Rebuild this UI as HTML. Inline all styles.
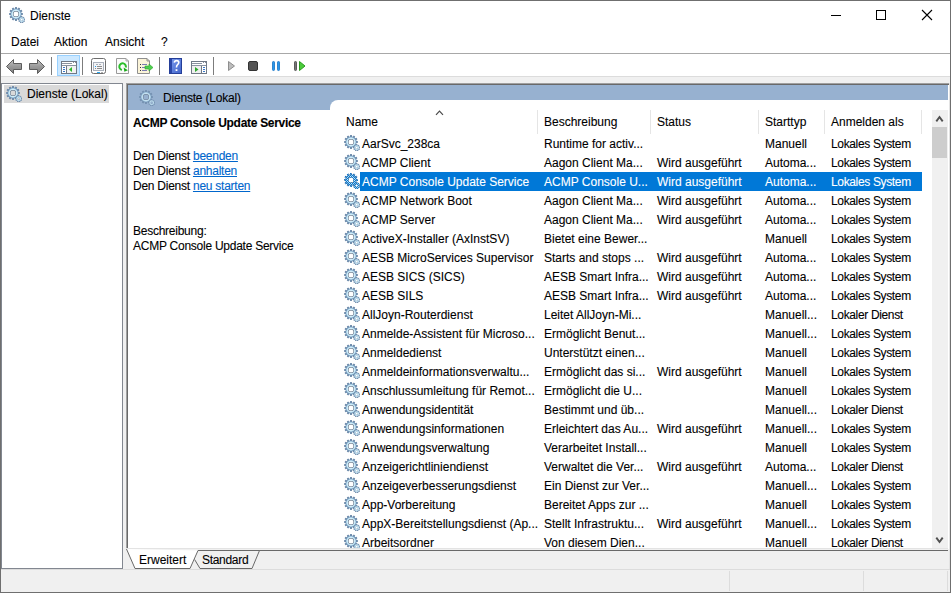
<!DOCTYPE html>
<html><head><meta charset="utf-8"><title>Dienste</title>
<style>
*{margin:0;padding:0;box-sizing:border-box}
html,body{width:951px;height:593px;overflow:hidden;background:#fff}
body{position:relative;font-family:"Liberation Sans",sans-serif;font-size:12px;line-height:15px;color:#000;-webkit-text-stroke:0.1px currentColor}
.a{position:absolute}
.t{position:absolute;white-space:nowrap;font-size:12px;line-height:15px}
.ic{position:absolute;width:16px;height:16px}
.sel{color:#fff}
</style></head><body>
<svg width="0" height="0" style="position:absolute">
<defs>
<radialGradient id="gg" cx="0.5" cy="0.5" r="0.5" gradientUnits="objectBoundingBox">
<stop offset="0" stop-color="#ffffff"/><stop offset="0.6" stop-color="#e2f6fd"/><stop offset="0.8" stop-color="#bfe3f4"/><stop offset="1" stop-color="#8cb4d4"/>
</radialGradient>
<symbol id="gear" viewBox="0 0 16 16">
<path d="M5.86 1.72 L6.15 0.05 L7.85 0.05 L8.14 1.72 L8.40 1.78 L8.65 1.86 L9.74 0.56 L11.21 1.41 L10.63 3.00 L10.82 3.18 L11.00 3.37 L12.59 2.79 L13.44 4.26 L12.14 5.35 L12.22 5.60 L12.28 5.86 L13.95 6.15 L13.95 7.85 L12.28 8.14 L12.22 8.40 L12.14 8.65 L13.44 9.74 L12.59 11.21 L11.00 10.63 L10.82 10.82 L10.63 11.00 L11.21 12.59 L9.74 13.44 L8.65 12.14 L8.40 12.22 L8.14 12.28 L7.85 13.95 L6.15 13.95 L5.86 12.28 L5.60 12.22 L5.35 12.14 L4.26 13.44 L2.79 12.59 L3.37 11.00 L3.18 10.82 L3.00 10.63 L1.41 11.21 L0.56 9.74 L1.86 8.65 L1.78 8.40 L1.72 8.14 L0.05 7.85 L0.05 6.15 L1.72 5.86 L1.78 5.60 L1.86 5.35 L0.56 4.26 L1.41 2.79 L3.00 3.37 L3.18 3.18 L3.37 3.00 L2.79 1.41 L4.26 0.56 L5.35 1.86 L5.60 1.78ZM4.30 7.00a2.7 2.7 0 1 0 5.40 0a2.7 2.7 0 1 0 -5.40 0Z" fill="#6d8bab" fill-rule="evenodd"/>
<path d="M1.90 7.00a5.1 5.1 0 1 0 10.20 0a5.1 5.1 0 1 0 -10.20 0ZM4.00 7.00a3.0 3.0 0 1 0 6.00 0a3.0 3.0 0 1 0 -6.00 0Z" fill="url(#gg)" fill-rule="evenodd"/>
<path d="M3.90 7.00a3.1 3.1 0 1 0 6.20 0a3.1 3.1 0 1 0 -6.20 0ZM4.40 7.00a2.6 2.6 0 1 0 5.20 0a2.6 2.6 0 1 0 -5.20 0Z" fill="#5d6b7c" fill-rule="evenodd" opacity="0.9"/>
<path d="M11.87 10.24 L12.15 9.24 L13.25 9.24 L13.53 10.24 L13.59 10.26 L13.64 10.28 L14.50 9.70 L15.34 10.40 L14.92 11.35 L14.95 11.40 L14.98 11.45 L16.01 11.56 L16.20 12.64 L15.27 13.09 L15.26 13.15 L15.25 13.21 L15.97 13.95 L15.42 14.90 L14.41 14.65 L14.37 14.69 L14.33 14.73 L14.40 15.76 L13.37 16.14 L12.76 15.30 L12.70 15.30 L12.64 15.30 L12.03 16.14 L11.00 15.76 L11.07 14.73 L11.03 14.69 L10.99 14.65 L9.98 14.90 L9.43 13.95 L10.15 13.21 L10.14 13.15 L10.13 13.09 L9.20 12.64 L9.39 11.56 L10.42 11.45 L10.45 11.40 L10.48 11.35 L10.06 10.40 L10.90 9.70 L11.76 10.28 L11.81 10.26ZM11.60 12.70a1.1 1.1 0 1 0 2.20 0a1.1 1.1 0 1 0 -2.20 0Z" fill="#6d8bab" fill-rule="evenodd"/>
<path d="M10.30 12.70a2.4 2.4 0 1 0 4.80 0a2.4 2.4 0 1 0 -4.80 0ZM11.50 12.70a1.2 1.2 0 1 0 2.40 0a1.2 1.2 0 1 0 -2.40 0Z" fill="#c8e8f6" fill-rule="evenodd"/>
</symbol>
<filter id="tint" color-interpolation-filters="sRGB"><feComponentTransfer><feFuncR type="linear" slope="1.1" intercept="-0.45"/><feFuncG type="linear" slope="1.4" intercept="-0.6"/><feFuncB type="linear" slope="1.6" intercept="-0.6"/></feComponentTransfer></filter>
<filter id="wht" color-interpolation-filters="sRGB"><feColorMatrix type="matrix" values="0 0 0 0 1 0 0 0 0 1 0 0 0 0 1 0 0 0 1 0"/></filter>
<pattern id="chk" width="2" height="2" patternUnits="userSpaceOnUse"><rect width="1" height="1" fill="#0078d7"/><rect x="1" y="1" width="1" height="1" fill="#0078d7"/></pattern>
<mask id="gm" maskUnits="userSpaceOnUse" x="0" y="0" width="16" height="16"><use href="#gear" width="16" height="16" filter="url(#wht)"/></mask>
</defs>
</svg>

<div class="a" style="left:0;top:0;width:951px;height:593px;border:1px solid #6f6f6f"></div>
<svg class="ic" style="left:9px;top:7px"><use href="#gear"/></svg>
<div class="t" style="left:30px;top:9px">Dienste</div>
<div class="a" style="left:831px;top:15px;width:10px;height:1px;background:#000"></div>
<div class="a" style="left:876px;top:10px;width:10px;height:10px;border:1px solid #000"></div>
<svg class="a" style="left:921px;top:9px" width="12" height="12"><path d="M1 1L11 11M11 1L1 11" stroke="#000" stroke-width="1.1"/></svg>
<div class="t" style="left:11px;top:35px">Datei</div>
<div class="t" style="left:54px;top:35px">Aktion</div>
<div class="t" style="left:105px;top:35px">Ansicht</div>
<div class="t" style="left:161px;top:35px">?</div>
<div class="a" style="left:1px;top:53px;width:949px;height:1px;background:#a8a8a8"></div>
<svg class="a" style="left:0;top:0" width="320" height="80" viewBox="0 0 320 80">
<defs>
<linearGradient id="ag" x1="0" y1="0" x2="0" y2="1"><stop offset="0" stop-color="#c4c4c4"/><stop offset="0.5" stop-color="#9a9a9a"/><stop offset="1" stop-color="#7e7e7e"/></linearGradient>
<linearGradient id="hb" x1="0" y1="0" x2="1" y2="1"><stop offset="0" stop-color="#7f9ff0"/><stop offset="1" stop-color="#3f62c8"/></linearGradient>
</defs>
<!-- back / forward -->
<path d="M6.5 66.5L13.5 59.5V63.5H21.5V69.5H13.5V73.5Z" fill="url(#ag)" stroke="#5c5c5c" stroke-width="1" stroke-linejoin="round"/>
<path d="M44.5 66.5L37.5 59.5V63.5H29.5V69.5H37.5V73.5Z" fill="url(#ag)" stroke="#5c5c5c" stroke-width="1" stroke-linejoin="round"/>
<rect x="51" y="57" width="1" height="18" fill="#7c7c7c"/>
<!-- selected button -->
<rect x="57.5" y="55.5" width="22" height="20" fill="#cce8ff" stroke="#99d1ff"/>
<rect x="61.5" y="61.5" width="15" height="12" fill="#fff" stroke="#6f7885"/>

<rect x="62" y="63" width="10" height="1" fill="#8a93a0"/>
<rect x="62" y="65" width="14" height="1" fill="#8a93a0"/>
<rect x="66" y="66" width="1" height="7" fill="#6f7885"/>
<rect x="63" y="67" width="2" height="1" fill="#3a78c8"/><rect x="63" y="69" width="2" height="1" fill="#3a78c8"/><rect x="63" y="71" width="2" height="1" fill="#3a78c8"/>
<rect x="67" y="66" width="9" height="7" fill="#f2f2f2"/><rect x="73" y="62" width="1" height="1" fill="#8a93a0"/><rect x="75" y="62" width="1" height="1" fill="#8a93a0"/><path d="M69 69.5L72 67V72Z" fill="#2ab82a"/>
<rect x="82" y="57" width="1" height="18" fill="#7c7c7c"/>
<!-- properties -->
<rect x="91.5" y="58.5" width="14" height="15" rx="2" fill="#fff" stroke="#6d6d6d"/>
<rect x="93.5" y="62.5" width="10" height="8" fill="#f4f4f6" stroke="#a9b0bb"/>
<rect x="96" y="64" width="2" height="1" fill="#a9b0bb"/><rect x="99" y="64" width="2" height="1" fill="#a9b0bb"/>
<rect x="95" y="66" width="1" height="1" fill="#1aa0f0"/><rect x="97" y="66" width="5" height="1" fill="#8c8c8c"/>
<rect x="95" y="68" width="1" height="1" fill="#8c8c8c"/><rect x="97" y="68" width="5" height="1" fill="#8c8c8c"/>
<rect x="97" y="72" width="3" height="1" fill="#2aa8f0"/><rect x="101" y="72" width="2" height="1" fill="#b0b0b0"/>
<!-- refresh -->
<path d="M116.5 58.5H126L128.5 61V73.5H116.5Z" fill="#fbfbfb" stroke="#9a9a9a"/>
<path d="M126 58.5V61H128.5" fill="none" stroke="#a8a8a8"/>
<path d="M122.03 69.85A3.3 3.3 0 1 1 125.79 67.45" fill="none" stroke="#2cbf2c" stroke-width="2"/>
<path d="M123.6 67.6L127.9 70.3L124.4 71.8Z" fill="#19a819"/>
<!-- export -->
<path d="M137.5 58.5H147L149.5 61V73.5H137.5Z" fill="#fbf4d8" stroke="#8f8f8f"/>
<path d="M147 58.5V61H149.5" fill="none" stroke="#8f8f8f"/>
<rect x="140" y="64" width="1" height="1" fill="#333"/><rect x="140" y="67" width="1" height="1" fill="#333"/><rect x="140" y="70" width="1" height="1" fill="#333"/>
<rect x="142" y="64" width="5" height="1" fill="#7c7cb0"/><rect x="142" y="67" width="5" height="1" fill="#7c7cb0"/><rect x="142" y="70" width="5" height="1" fill="#7c7cb0"/>
<path d="M145 66H149V64L153 67.5L149 71V69H145Z" fill="#4fcf4f" stroke="#2aa52a" stroke-width="0.6"/>
<rect x="159" y="57" width="1" height="18" fill="#7c7c7c"/>
<!-- help -->
<rect x="169" y="58" width="13" height="16" fill="url(#hb)"/>
<rect x="169" y="58" width="3" height="16" fill="#2a46a8"/>
<rect x="169.5" y="58.5" width="12" height="15" fill="none" stroke="#243e98"/>
<path d="M174.3 62.6Q174.6 60.6 176.6 60.6Q178.8 60.6 178.8 62.6Q178.8 63.9 177.4 64.9Q176.5 65.6 176.5 67.4" fill="none" stroke="#fff" stroke-width="1.6"/>
<rect x="175.6" y="69.2" width="1.8" height="1.8" fill="#fff"/>
<!-- action pane -->
<rect x="191.5" y="61.5" width="15" height="12" fill="#fff" stroke="#6f7885"/>
<rect x="192" y="63" width="10" height="1" fill="#8a93a0"/>
<rect x="203" y="62" width="1" height="1" fill="#8a93a0"/><rect x="205" y="62" width="1" height="1" fill="#8a93a0"/>
<rect x="192" y="65" width="14" height="1" fill="#8a93a0"/>
<rect x="201" y="66" width="1" height="7" fill="#6f7885"/>
<rect x="192" y="66" width="9" height="7" fill="#efefef"/>
<rect x="203" y="67" width="2" height="1" fill="#3a78c8"/><rect x="203" y="69" width="2" height="1" fill="#3a78c8"/><rect x="203" y="71" width="2" height="1" fill="#3a78c8"/>
<path d="M195 67V72L198.5 69.5Z" fill="#2ca82c"/>
<rect x="213" y="57" width="1" height="18" fill="#7c7c7c"/>
<!-- play disabled -->
<path d="M228.5 61.5V70.5L234.5 66Z" fill="#bdbdbd" stroke="#8e8e8e" stroke-linejoin="round"/>
<!-- stop -->
<rect x="248.5" y="61.5" width="9" height="9" rx="1.5" fill="#555" stroke="#333"/>
<!-- pause -->
<rect x="272.5" y="61.5" width="2" height="9" rx="0.8" fill="#2b97ea" stroke="#1572c4" stroke-width="0.8"/>
<rect x="277.5" y="61.5" width="2" height="9" rx="0.8" fill="#2b97ea" stroke="#1572c4" stroke-width="0.8"/>
<!-- restart -->
<rect x="294.5" y="61.5" width="2" height="9" rx="0.8" fill="#777" stroke="#444" stroke-width="0.8"/>
<path d="M299.5 61.5V70.5L305 66Z" fill="#4bcc3b" stroke="#2a9a20" stroke-linejoin="round"/>
</svg>

<div class="a" style="left:1px;top:76px;width:949px;height:1px;background:#dcdcdc"></div>
<div class="a" style="left:1px;top:77px;width:949px;height:515px;background:#f0f0f0"></div>
<div class="a" style="left:1px;top:83px;width:122px;height:486px;background:#fff;border:1px solid #828790"></div>
<div class="a" style="left:4px;top:85px;width:105px;height:18px;background:#d9d9d9"></div>
<svg class="ic" style="left:6px;top:86px"><use href="#gear"/></svg>
<div class="t" style="left:27px;top:87px">Dienste (Lokal)</div>
<div class="a" style="left:126px;top:83px;width:824px;height:466px;background:#fff;border-top:1px solid #a0a0a0;border-left:1px solid #a0a0a0"></div>
<div class="a" style="left:127px;top:84px;width:822px;height:1px;background:#696969"></div>
<div class="a" style="left:127px;top:84px;width:1px;height:465px;background:#696969"></div>
<div class="a" style="left:128px;top:85px;width:820px;height:15px;background:#97b1d0"></div>
<div class="a" style="left:128px;top:100px;width:210px;height:10px;background:#97b1d0"></div>
<div class="a" style="left:330px;top:100px;width:20px;height:20px;background:#fff;border-top-left-radius:8px"></div>
<svg class="ic" style="left:139px;top:90px;opacity:.8"><use href="#gear"/></svg>
<div class="t" style="left:163px;top:91px;letter-spacing:-0.2px">Dienste (Lokal)</div>
<div class="t" style="left:133px;top:116px;font-weight:bold;letter-spacing:-0.3px">ACMP Console Update Service</div>
<div class="t" style="left:133px;top:149px;letter-spacing:-0.25px">Den Dienst <span style="color:#0066cc;text-decoration:underline">beenden</span></div>
<div class="t" style="left:133px;top:164px;letter-spacing:-0.25px">Den Dienst <span style="color:#0066cc;text-decoration:underline">anhalten</span></div>
<div class="t" style="left:133px;top:179px;letter-spacing:-0.25px">Den Dienst <span style="color:#0066cc;text-decoration:underline">neu starten</span></div>
<div class="t" style="left:133px;top:224px;letter-spacing:-0.25px">Beschreibung:</div>
<div class="t" style="left:133px;top:239px;letter-spacing:-0.25px">ACMP Console Update Service</div>
<div class="t" style="left:346px;top:115px">Name</div>
<div class="t" style="left:544px;top:115px">Beschreibung</div>
<div class="t" style="left:657px;top:115px">Status</div>
<div class="t" style="left:765px;top:115px">Starttyp</div>
<div class="t" style="left:831px;top:115px">Anmelden als</div>
<div class="a" style="left:537px;top:110px;width:1px;height:24px;background:#e5e5e5"></div>
<div class="a" style="left:650px;top:110px;width:1px;height:24px;background:#e5e5e5"></div>
<div class="a" style="left:758px;top:110px;width:1px;height:24px;background:#e5e5e5"></div>
<div class="a" style="left:824px;top:110px;width:1px;height:24px;background:#e5e5e5"></div>
<div class="a" style="left:921px;top:110px;width:1px;height:24px;background:#e5e5e5"></div>
<svg class="a" style="left:435px;top:110px" width="10" height="6"><path d="M1 4.8L4.5 1.2L8 4.8" fill="none" stroke="#4a4a4a" stroke-width="1.2"/></svg>
<svg class="ic" style="left:344px;top:135px"><use href="#gear"/></svg>
<div class="t" style="left:362px;top:137px">AarSvc_238ca</div>
<div class="t" style="left:544px;top:137px">Runtime for activ...</div>
<div class="t" style="left:765px;top:137px">Manuell</div>
<div class="t" style="left:831px;top:137px;letter-spacing:-0.35px">Lokales System</div>
<svg class="ic" style="left:344px;top:154px"><use href="#gear"/></svg>
<div class="t" style="left:362px;top:156px">ACMP Client</div>
<div class="t" style="left:544px;top:156px">Aagon Client Ma...</div>
<div class="t" style="left:657px;top:156px">Wird ausgeführt</div>
<div class="t" style="left:765px;top:156px">Automa...</div>
<div class="t" style="left:831px;top:156px;letter-spacing:-0.35px">Lokales System</div>
<div class="a" style="left:360px;top:172px;width:562px;height:19px;background:#0078d7"></div>
<svg class="ic" style="left:344px;top:173px" viewBox="0 0 16 16"><use href="#gear" width="16" height="16"/><rect width="16" height="16" fill="url(#chk)" mask="url(#gm)"/></svg>
<div class="t sel" style="left:362px;top:175px">ACMP Console Update Service</div>
<div class="t sel" style="left:544px;top:175px">ACMP Console U...</div>
<div class="t sel" style="left:657px;top:175px">Wird ausgeführt</div>
<div class="t sel" style="left:765px;top:175px">Automa...</div>
<div class="t sel" style="left:831px;top:175px;letter-spacing:-0.35px">Lokales System</div>
<svg class="ic" style="left:344px;top:192px"><use href="#gear"/></svg>
<div class="t" style="left:362px;top:194px">ACMP Network Boot</div>
<div class="t" style="left:544px;top:194px">Aagon Client Ma...</div>
<div class="t" style="left:657px;top:194px">Wird ausgeführt</div>
<div class="t" style="left:765px;top:194px">Automa...</div>
<div class="t" style="left:831px;top:194px;letter-spacing:-0.35px">Lokales System</div>
<svg class="ic" style="left:344px;top:211px"><use href="#gear"/></svg>
<div class="t" style="left:362px;top:213px">ACMP Server</div>
<div class="t" style="left:544px;top:213px">Aagon Client Ma...</div>
<div class="t" style="left:657px;top:213px">Wird ausgeführt</div>
<div class="t" style="left:765px;top:213px">Automa...</div>
<div class="t" style="left:831px;top:213px;letter-spacing:-0.35px">Lokales System</div>
<svg class="ic" style="left:344px;top:230px"><use href="#gear"/></svg>
<div class="t" style="left:362px;top:232px">ActiveX-Installer (AxInstSV)</div>
<div class="t" style="left:544px;top:232px">Bietet eine Bewer...</div>
<div class="t" style="left:765px;top:232px">Manuell</div>
<div class="t" style="left:831px;top:232px;letter-spacing:-0.35px">Lokales System</div>
<svg class="ic" style="left:344px;top:249px"><use href="#gear"/></svg>
<div class="t" style="left:362px;top:251px">AESB MicroServices Supervisor</div>
<div class="t" style="left:544px;top:251px">Starts and stops ...</div>
<div class="t" style="left:657px;top:251px">Wird ausgeführt</div>
<div class="t" style="left:765px;top:251px">Automa...</div>
<div class="t" style="left:831px;top:251px;letter-spacing:-0.35px">Lokales System</div>
<svg class="ic" style="left:344px;top:268px"><use href="#gear"/></svg>
<div class="t" style="left:362px;top:270px">AESB SICS (SICS)</div>
<div class="t" style="left:544px;top:270px">AESB Smart Infra...</div>
<div class="t" style="left:657px;top:270px">Wird ausgeführt</div>
<div class="t" style="left:765px;top:270px">Automa...</div>
<div class="t" style="left:831px;top:270px;letter-spacing:-0.35px">Lokales System</div>
<svg class="ic" style="left:344px;top:287px"><use href="#gear"/></svg>
<div class="t" style="left:362px;top:289px">AESB SILS</div>
<div class="t" style="left:544px;top:289px">AESB Smart Infra...</div>
<div class="t" style="left:657px;top:289px">Wird ausgeführt</div>
<div class="t" style="left:765px;top:289px">Automa...</div>
<div class="t" style="left:831px;top:289px;letter-spacing:-0.35px">Lokales System</div>
<svg class="ic" style="left:344px;top:306px"><use href="#gear"/></svg>
<div class="t" style="left:362px;top:308px">AllJoyn-Routerdienst</div>
<div class="t" style="left:544px;top:308px">Leitet AllJoyn-Mi...</div>
<div class="t" style="left:765px;top:308px">Manuell...</div>
<div class="t" style="left:831px;top:308px;letter-spacing:-0.35px">Lokaler Dienst</div>
<svg class="ic" style="left:344px;top:325px"><use href="#gear"/></svg>
<div class="t" style="left:362px;top:327px">Anmelde-Assistent für Microso...</div>
<div class="t" style="left:544px;top:327px">Ermöglicht Benut...</div>
<div class="t" style="left:765px;top:327px">Manuell...</div>
<div class="t" style="left:831px;top:327px;letter-spacing:-0.35px">Lokales System</div>
<svg class="ic" style="left:344px;top:344px"><use href="#gear"/></svg>
<div class="t" style="left:362px;top:346px">Anmeldedienst</div>
<div class="t" style="left:544px;top:346px">Unterstützt einen...</div>
<div class="t" style="left:765px;top:346px">Manuell</div>
<div class="t" style="left:831px;top:346px;letter-spacing:-0.35px">Lokales System</div>
<svg class="ic" style="left:344px;top:363px"><use href="#gear"/></svg>
<div class="t" style="left:362px;top:365px">Anmeldeinformationsverwaltu...</div>
<div class="t" style="left:544px;top:365px">Ermöglicht das si...</div>
<div class="t" style="left:657px;top:365px">Wird ausgeführt</div>
<div class="t" style="left:765px;top:365px">Manuell</div>
<div class="t" style="left:831px;top:365px;letter-spacing:-0.35px">Lokales System</div>
<svg class="ic" style="left:344px;top:382px"><use href="#gear"/></svg>
<div class="t" style="left:362px;top:384px">Anschlussumleitung für Remot...</div>
<div class="t" style="left:544px;top:384px">Ermöglicht die U...</div>
<div class="t" style="left:765px;top:384px">Manuell</div>
<div class="t" style="left:831px;top:384px;letter-spacing:-0.35px">Lokales System</div>
<svg class="ic" style="left:344px;top:401px"><use href="#gear"/></svg>
<div class="t" style="left:362px;top:403px">Anwendungsidentität</div>
<div class="t" style="left:544px;top:403px">Bestimmt und üb...</div>
<div class="t" style="left:765px;top:403px">Manuell...</div>
<div class="t" style="left:831px;top:403px;letter-spacing:-0.35px">Lokaler Dienst</div>
<svg class="ic" style="left:344px;top:420px"><use href="#gear"/></svg>
<div class="t" style="left:362px;top:422px">Anwendungsinformationen</div>
<div class="t" style="left:544px;top:422px">Erleichtert das Au...</div>
<div class="t" style="left:657px;top:422px">Wird ausgeführt</div>
<div class="t" style="left:765px;top:422px">Manuell...</div>
<div class="t" style="left:831px;top:422px;letter-spacing:-0.35px">Lokales System</div>
<svg class="ic" style="left:344px;top:439px"><use href="#gear"/></svg>
<div class="t" style="left:362px;top:441px">Anwendungsverwaltung</div>
<div class="t" style="left:544px;top:441px">Verarbeitet Install...</div>
<div class="t" style="left:765px;top:441px">Manuell</div>
<div class="t" style="left:831px;top:441px;letter-spacing:-0.35px">Lokales System</div>
<svg class="ic" style="left:344px;top:458px"><use href="#gear"/></svg>
<div class="t" style="left:362px;top:460px">Anzeigerichtliniendienst</div>
<div class="t" style="left:544px;top:460px">Verwaltet die Ver...</div>
<div class="t" style="left:657px;top:460px">Wird ausgeführt</div>
<div class="t" style="left:765px;top:460px">Automa...</div>
<div class="t" style="left:831px;top:460px;letter-spacing:-0.35px">Lokaler Dienst</div>
<svg class="ic" style="left:344px;top:477px"><use href="#gear"/></svg>
<div class="t" style="left:362px;top:479px">Anzeigeverbesserungsdienst</div>
<div class="t" style="left:544px;top:479px">Ein Dienst zur Ver...</div>
<div class="t" style="left:765px;top:479px">Manuell...</div>
<div class="t" style="left:831px;top:479px;letter-spacing:-0.35px">Lokales System</div>
<svg class="ic" style="left:344px;top:496px"><use href="#gear"/></svg>
<div class="t" style="left:362px;top:498px">App-Vorbereitung</div>
<div class="t" style="left:544px;top:498px">Bereitet Apps zur ...</div>
<div class="t" style="left:765px;top:498px">Manuell</div>
<div class="t" style="left:831px;top:498px;letter-spacing:-0.35px">Lokales System</div>
<svg class="ic" style="left:344px;top:515px"><use href="#gear"/></svg>
<div class="t" style="left:362px;top:517px">AppX-Bereitstellungsdienst (Ap...</div>
<div class="t" style="left:544px;top:517px">Stellt Infrastruktu...</div>
<div class="t" style="left:657px;top:517px">Wird ausgeführt</div>
<div class="t" style="left:765px;top:517px">Manuell...</div>
<div class="t" style="left:831px;top:517px;letter-spacing:-0.35px">Lokales System</div>
<svg class="ic" style="left:344px;top:534px"><use href="#gear"/></svg>
<div class="t" style="left:362px;top:536px">Arbeitsordner</div>
<div class="t" style="left:544px;top:536px">Von diesem Dien...</div>
<div class="t" style="left:765px;top:536px">Manuell</div>
<div class="t" style="left:831px;top:536px;letter-spacing:-0.35px">Lokaler Dienst</div>
<div class="a" style="left:949px;top:83px;width:1px;height:486px;background:#e3e3e3"></div>
<div class="a" style="left:932px;top:110px;width:16px;height:439px;background:#f0f0f0"></div>
<div class="a" style="left:932px;top:127px;width:15px;height:31px;background:#cdcdcd"></div>
<svg class="a" style="left:934px;top:114px" width="12" height="10"><path d="M2.3 7.4L5.5 3L8.7 7.4" fill="none" stroke="#505050" stroke-width="1.9"/></svg>
<svg class="a" style="left:934px;top:535px" width="12" height="10"><path d="M2.3 2.6L5.5 7L8.7 2.6" fill="none" stroke="#505050" stroke-width="1.9"/></svg>
<div class="a" style="left:123px;top:549px;width:826px;height:20px;background:#f0f0f0"></div>
<svg class="a" style="left:0;top:0" width="951" height="593"><path d="M126 548.5H948" stroke="#e3e3e3"/><path d="M259 550.5H948" stroke="#696969"/><path d="M126.5 549L135 568.5H190L198 550.5Z" fill="#fff"/><path d="M198 550.5H259.5L252 568.5H200L194.6 559.5L198 550.5Z" fill="#f0f0f0"/><path d="M126.5 549L135 568.5H190L198 550.5H259.5L252 568.5H200L194.6 559.5" fill="none" stroke="#696969" stroke-width="1"/></svg>
<div class="t" style="left:139px;top:553px">Erweitert</div>
<div class="t" style="left:202px;top:553px;letter-spacing:-0.3px">Standard</div>
<div class="a" style="left:1px;top:569px;width:949px;height:1px;background:#dcdcdc"></div>
<div class="a" style="left:729px;top:571px;width:1px;height:20px;background:#dcdcdc"></div>
<div class="a" style="left:863px;top:571px;width:1px;height:20px;background:#dcdcdc"></div>
<div class="a" style="left:947px;top:571px;width:1px;height:20px;background:#dcdcdc"></div>
</body></html>
